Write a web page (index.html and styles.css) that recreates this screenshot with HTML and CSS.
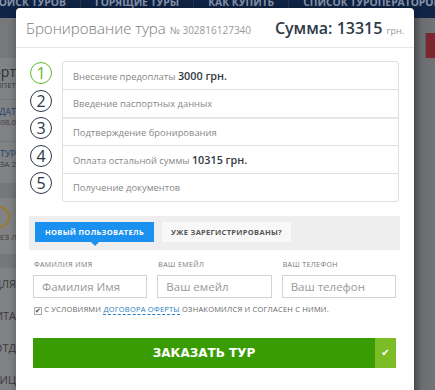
FILE: index.html
```html
<!DOCTYPE html>
<html lang="ru">
<head>
    <meta charset="UTF-8">
    <meta name="viewport" content="width=device-width, initial-scale=1.0">
    <title>Бронирование тура</title>
    <link rel="stylesheet" href="styles.css">
</head>
<body>
    <!-- страница под затемнением -->
    <div class="page">
        <div class="topnav">
            <span class="first">ПОИСК ТУРОВ</span>
            <span>ГОРЯЩИЕ ТУРЫ</span>
            <span>КАК КУПИТЬ</span>
            <span>СПИСОК ТУРОПЕРАТОРОВ</span>
            <span class="info">i</span>
            <span class="flag"></span>
        </div>
        <div class="page-body">
            <div class="side">
                <div class="side-head"></div>
                <div class="side-block">
                    <div class="big">орт</div>
                    <div class="tiny">ИПЕТ</div>
                </div>
                <div class="side-block">
                    <div class="blue">ДАТ</div>
                    <div class="tiny">08.0</div>
                </div>
                <div class="side-block">
                    <div class="blue">ТУР</div>
                    <div class="tiny">ЗА 2</div>
                </div>
                <div class="side-band"></div>
                <div class="side-icon">
                    <span class="ring"></span>
                    <div class="tiny">ЕЗ Л</div>
                </div>
                <div class="side-band"></div>
                <div class="side-row">ДЛЯ</div>
                <div class="side-row">ИТА</div>
                <div class="side-row">ОТД</div>
                <div class="side-row">ИЦ</div>
            </div>
            <div class="right-strip">
                <div class="red-box"></div>
            </div>
        </div>
    </div>

    <div class="modal">
        <div class="modal-header">
            <div class="title">Бронирование тура <small>№ 302816127340</small></div>
            <div class="sum">Сумма: 13315 <small>грн.</small></div>
        </div>

        <div class="steps">
            <div class="nums">
                <span class="num done">1</span>
                <span class="num">2</span>
                <span class="num">3</span>
                <span class="num">4</span>
                <span class="num">5</span>
            </div>
            <div class="step-list">
                <div class="step">Внесение предоплаты <b>3000 грн.</b></div>
                <div class="step">Введение паспортных данных</div>
                <div class="step">Подтверждение бронирования</div>
                <div class="step">Оплата остальной суммы <b>10315 грн.</b></div>
                <div class="step">Получение документов</div>
            </div>
        </div>

        <div class="tabs">
            <span class="tab active">Новый пользователь</span>
            <span class="tab">Уже зарегистрированы?</span>
        </div>

        <div class="fields">
            <label class="field">
                <span class="label">Фамилия Имя</span>
                <input type="text" placeholder="Фамилия Имя">
            </label>
            <label class="field">
                <span class="label">Ваш емейл</span>
                <input type="text" placeholder="Ваш емейл">
            </label>
            <label class="field">
                <span class="label">Ваш телефон</span>
                <input type="text" placeholder="Ваш телефон">
            </label>
        </div>

        <div class="agree">
            <span class="check">&#10004;</span> С условиями <a href="#">договора оферты</a> ознакомился и согласен с ними.
        </div>

        <button class="order"><span class="order-text">Заказать тур</span><span class="tick">&#10004;</span></button>
    </div>
</body>
</html>
```

FILE: styles.css
```css
body {
    margin: 0;
    font-family: "Open Sans", Arial, sans-serif;
    background-color: #7a7b7c;
    overflow: hidden;
}
.page {
    height: 390px;
}
.topnav {
    height: 18px;
    background-color: #0f2446;
    color: #8a96ab;
    font-size: 10.3px;
    font-weight: bold;
    display: flex;
    align-items: flex-start;
    overflow: hidden;
    white-space: nowrap;
}
.topnav span {
    margin-top: -7px;
    padding: 0 14px;
    border-left: 1px solid #24375a;
    line-height: 18px;
}
.topnav .first {
    margin-left: -9px;
    padding-left: 0;
    border-left: none;
}
.topnav .info {
    margin-left: 2px;
    font-style: italic;
}
.topnav .flag {
    margin-left: auto;
    margin-top: 0;
    width: 10px;
    height: 10px;
    padding: 0;
    border: none;
    background: linear-gradient(#d8d8d8 33%, #2b3f8e 33%, #2b3f8e 66%, #a02a2a 66%);
}
.page-body {
    display: flex;
    height: 372px;
}
.side {
    width: 16px;
    overflow: hidden;
    white-space: nowrap;
    background-color: #818283;
    color: #2e3033;
}
.side-head {
    height: 40px;
    background-color: #777879;
}
.side-block {
    height: 42px;
    padding-top: 6px;
    box-sizing: border-box;
    border-bottom: 1px solid #767676;
    direction: rtl;
}
.side .big {
    font-size: 14px;
    line-height: 16px;
}
.side .tiny {
    font-size: 8px;
    line-height: 9px;
    color: #3b3d40;
}
.side .blue {
    font-size: 9px;
    line-height: 11px;
    color: #24456e;
}
.side-band {
    height: 14px;
    background-color: #76777a;
}
.side-icon {
    height: 56px;
    padding-top: 8px;
    box-sizing: border-box;
}
.ring {
    display: block;
    width: 22px;
    height: 22px;
    margin-left: -12px;
    margin-bottom: 4px;
    border: 2px solid #9a7a32;
    border-radius: 50%;
    box-sizing: border-box;
}
.side-row {
    height: 32px;
    line-height: 32px;
    font-size: 11px;
    color: #3a3b3d;
    direction: rtl;
}
.right-strip {
    margin-left: auto;
    width: 21px;
    background: linear-gradient(to right, #55575a, #6c6e71 40%, #717376);
    display: flex;
    justify-content: flex-end;
}
.red-box {
    width: 9px;
    height: 25px;
    margin-top: 15px;
    background-color: #7c2630;
    border-left: 1px solid #5a5d60;
}

/* модальное окно */
.modal {
    position: absolute;
    left: 16px;
    top: 8px;
    width: 398px;
    height: 400px;
    background-color: #fff;
    border-radius: 4px 4px 0 0;
    box-shadow: 0 0 8px rgba(0, 0, 0, 0.3);
}
.modal-header {
    height: 39px;
    display: flex;
    align-items: center;
    justify-content: space-between;
    padding: 0 10px 0 10px;
    border-bottom: 1px solid #e6e6e6;
}
.title {
    font-size: 15px;
    font-weight: 300;
    color: #7a7a7a;
}
.title small {
    font-size: 10px;
    font-weight: 400;
    color: #999;
}
.sum {
    font-size: 16px;
    font-weight: 600;
    color: #2f3a48;
}
.sum small {
    font-size: 9px;
    font-weight: 400;
    color: #999;
}
.steps {
    display: flex;
    margin: 13px 15px 0 14px;
}
.nums {
    width: 32px;
    display: flex;
    flex-direction: column;
    padding-top: 1px;
}
.num {
    width: 22px;
    height: 22px;
    margin-bottom: 5.5px;
    border: 1.5px solid #2b3547;
    border-radius: 50%;
    box-sizing: border-box;
    display: flex;
    justify-content: center;
    align-items: center;
    font-size: 16px;
    color: #2b3547;
}
.num.done {
    border-color: #5fb830;
    color: #5fb830;
}
.step-list {
    flex: 1;
    border: 1px solid #dedede;
    border-radius: 3px;
}
.step {
    height: 27px;
    line-height: 27px;
    padding-left: 10px;
    font-size: 9.4px;
    color: #888;
    border-top: 1px solid #e0e0e0;
}
.step:first-child {
    border-top: none;
}
.step:nth-child(3) {
    border-top: 2px solid #e6e6e6;
    height: 26px;
}
.step b {
    font-size: 10.8px;
    font-weight: 600;
    color: #333a45;
}
.tabs {
    display: flex;
    gap: 8px;
    margin: 14px 14px 0 13px;
    padding: 6px 6px 8px 6px;
    background-color: #eee;
}
.tab {
    position: relative;
    height: 20px;
    line-height: 20px;
    box-sizing: border-box;
    width: 129px;
    text-align: center;
    white-space: nowrap;
    font-size: 7.5px;
    font-weight: 700;
    letter-spacing: 0.3px;
    text-transform: uppercase;
    color: #555;
    background-color: #f8f8f8;
}
.tab.active {
    width: 119px;
    background-color: #1a90f0;
    color: #fff;
}
.tab.active::after {
    content: "";
    position: absolute;
    left: 50%;
    bottom: -4px;
    margin-left: -4px;
    border-left: 4px solid transparent;
    border-right: 4px solid transparent;
    border-top: 4px solid #1a90f0;
}
.fields {
    display: flex;
    gap: 10px;
    margin: 9px 18px 0 17px;
}
.field {
    flex: 1;
    display: flex;
    flex-direction: column;
}
.label {
    font-size: 7px;
    letter-spacing: 0.4px;
    text-transform: uppercase;
    color: #777;
    padding-left: 1px;
    height: 11px;
    line-height: 11px;
}
.field input {
    margin-top: 5px;
    height: 23px;
    box-sizing: border-box;
    border: 1px solid #d3d3d3;
    padding: 0 8px;
    font-family: "Open Sans", Arial, sans-serif;
    font-size: 11.5px;
    width: 100%;
}
.field input::placeholder {
    color: #999;
}
.agree {
    margin: 5px 0 0 18px;
    height: 12px;
    line-height: 12px;
    font-size: 7.5px;
    letter-spacing: 0.2px;
    text-transform: uppercase;
    color: #666;
    white-space: nowrap;
}
.check {
    display: inline-block;
    width: 6px;
    height: 6px;
    border: 1px solid #aaa;
    font-size: 7px;
    line-height: 6px;
    color: #444;
    text-align: center;
    vertical-align: -1px;
}
.agree a {
    color: #2a7cc0;
    text-decoration: none;
    border-bottom: 1px dashed #2a7cc0;
}
.order {
    display: flex;
    margin: 23px 18px 0 17px;
    width: 363px;
    height: 30px;
    padding: 0;
    border: none;
    border-radius: 0;
    background-color: #3a9c03;
    color: #fff;
    font-family: "DejaVu Sans", Arial, sans-serif;
    font-size: 12px;
    font-weight: bold;
    text-transform: uppercase;
    cursor: pointer;
}
.order-text {
    flex: 1;
    line-height: 30px;
    text-align: center;
}
.tick {
    width: 21px;
    height: 30px;
    line-height: 30px;
    font-size: 10px;
    background-color: #7cbc27;
}
```
